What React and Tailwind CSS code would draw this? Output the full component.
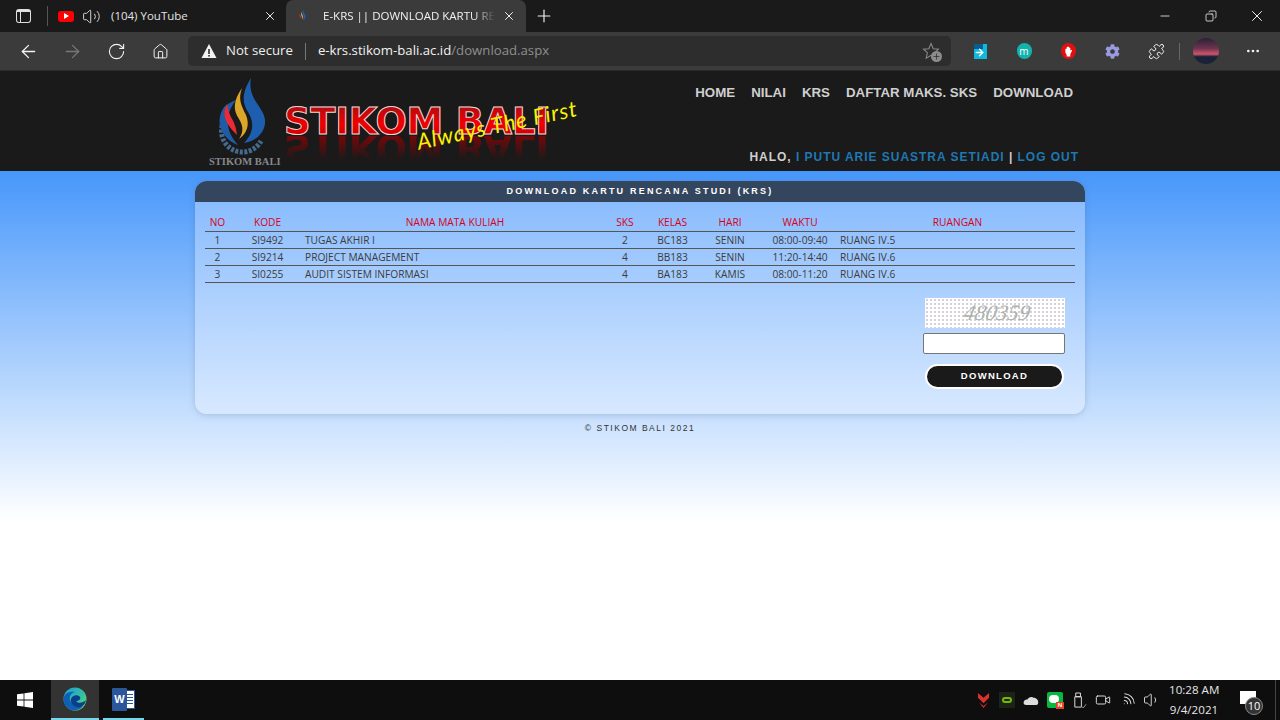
import {
  ArrowLeft,
  ArrowRight,
  Copy,
  Home,
  Minus,
  MoreHorizontal,
  Plus,
  Puzzle,
  RotateCw,
  Video,
  Volume1,
  Volume2,
  Wifi,
  X,
} from "lucide-react";
import { FaCog } from "react-icons/fa";

const courses = [
  { no: 1, kode: "SI9492", nama: "TUGAS AKHIR I", sks: 2, kelas: "BC183", hari: "SENIN", waktu: "08:00-09:40", ruang: "RUANG IV.5" },
  { no: 2, kode: "SI9214", nama: "PROJECT MANAGEMENT", sks: 4, kelas: "BB183", hari: "SENIN", waktu: "11:20-14:40", ruang: "RUANG IV.6" },
  { no: 3, kode: "SI0255", nama: "AUDIT SISTEM INFORMASI", sks: 4, kelas: "BA183", hari: "KAMIS", waktu: "08:00-11:20", ruang: "RUANG IV.6" },
];

const navItems = ["HOME", "NILAI", "KRS", "DAFTAR MAKS. SKS", "DOWNLOAD"];

function FlameLogo({ className }) {
  return (
    <svg viewBox="0 0 70 80" className={className}>
      <path d="M15 44 A21 21 0 0 0 52 64" fill="none" stroke="#456a8e" strokeWidth="5" strokeDasharray="3 1.5" />
      <path d="M15 30 C10 38 9 46 13 54 C16 60 22 66 29 68 C22 60 18 52 19 42 C19 36 22 30 27 23 C22 25 18 27 15 30 Z" fill="#1f5ba6" />
      <path d="M42 1 C34 14 32 24 39 35 C46 46 44 57 35 66 C48 64 57 54 56 43 C55 30 38 22 42 1 Z" fill="#1d5fae" />
      <path d="M33 11 C24 24 24 33 30 42 C35 50 34 56 30 62 C38 56 41 48 37 38 C32 28 29 22 33 11 Z" fill="#dca629" />
      <path d="M18 27 C13 36 15 46 28 58 C27 50 25 45 22 40 C20 36 19 32 18 27 Z" fill="#ec2a35" />
    </svg>
  );
}

function EdgeIcon() {
  return (
    <svg viewBox="0 0 24 24" className="w-6 h-6">
      <defs>
        <linearGradient id="edgeTop" x1="0" y1="0" x2="1" y2="1">
          <stop offset="0" stopColor="#1f9fd8" />
          <stop offset="0.6" stopColor="#35c1a0" />
          <stop offset="1" stopColor="#7fe04f" />
        </linearGradient>
      </defs>
      <circle cx="12" cy="12" r="11.5" fill="url(#edgeTop)" />
      <path d="M0.6 12 C1 6 7 4 12 5 C8 6 6 9 7 13 C8 18 14 20 20 19 C17 23 12 24 9 23 C4 22 0.5 17 0.6 12 Z" fill="#0f5fb5" />
      <path d="M8 12 C9 8 15 7 17 10 C18 12 16 14 13 14 C15 17 20 16 23 13 C22 19 17 21 14 20 C10 19 7 16 8 12 Z" fill="#0b3f8c" />
    </svg>
  );
}

function WordIcon() {
  return (
    <div className="relative w-[23px] h-[23px]">
      <div className="absolute right-0 top-[2px] w-[14px] h-[19px] bg-white border border-[#2b579a] flex flex-col justify-center gap-[2px] pl-[5px] pr-[1px]">
        <div className="h-[1px] bg-[#2b579a]" />
        <div className="h-[1px] bg-[#2b579a]" />
        <div className="h-[1px] bg-[#2b579a]" />
        <div className="h-[1px] bg-[#2b579a]" />
      </div>
      <div className="absolute left-0 top-0 w-[15px] h-[23px] bg-[#2b579a] rounded-[1px] flex items-center justify-center text-white text-[11px] font-bold font-['Liberation_Sans',sans-serif]">
        W
      </div>
    </div>
  );
}

function TabStrip() {
  return (
    <div className="h-8 bg-[#1a1a1a] flex items-end text-[11.5px] font-['Open_Sans',sans-serif]">
      <div className="w-[47px] h-8 flex items-center justify-center">
        <div className="w-[15px] h-[14px] border border-[#e0e0e0] rounded-[3px] border-t-[3px] relative">
          <div className="absolute left-[3px] top-0 bottom-0 w-[1px] bg-[#e0e0e0]" />
        </div>
      </div>
      <div className="w-[1px] h-5 bg-[#555] mb-[6px]" />
      <div className="w-[238px] h-8 flex items-center text-[#e4e4e4]">
        <div className="ml-[10px] w-[16px] h-[11px] bg-[#f00] rounded-[3px] flex items-center justify-center">
          <div className="w-0 h-0 border-y-[3px] border-y-transparent border-l-[5px] border-l-white" />
        </div>
        <Volume2 size={19} strokeWidth={1.2} className="ml-[8px] text-[#ddd]" />
        <span className="ml-[10px] flex-1">(104) YouTube</span>
        <X size={14} strokeWidth={1.7} className="mr-[9px] text-[#eee]" />
      </div>
      <div className="w-[240px] h-8 bg-[#3b3b3b] rounded-t-[7px] flex items-center text-[#f0f0f0]">
        <svg viewBox="0 0 70 80" className="ml-[11px] w-[11px] h-[14px]">
          <path d="M42 1 C34 14 32 24 39 35 C46 46 44 57 35 66 C48 64 57 54 56 43 C55 30 38 22 42 1 Z" fill="#1d5fae" />
          <path d="M33 11 C24 24 24 33 30 42 C35 50 34 56 30 62 C38 56 41 48 37 38 C32 28 29 22 33 11 Z" fill="#dca629" />
          <path d="M18 27 C13 36 15 46 28 58 C27 50 25 45 22 40 C20 36 19 32 18 27 Z" fill="#ec2a35" />
        </svg>
        <span className="ml-[15px] w-[172px] overflow-hidden whitespace-nowrap [mask-image:linear-gradient(90deg,#000_88%,transparent)]">
          E-KRS || DOWNLOAD KARTU RENCANA STUDI
        </span>
        <X size={14} strokeWidth={1.7} className="ml-[7px] text-[#f2f2f2]" />
      </div>
      <div className="w-9 h-8 flex items-center justify-center text-[#f2f2f2]">
        <Plus size={20} strokeWidth={1.4} />
      </div>
      <div className="ml-auto h-8 flex items-center text-[#f2f2f2]">
        <div className="w-[46px] flex justify-center"><Minus size={14} strokeWidth={1.4} /></div>
        <div className="w-[46px] flex justify-center"><Copy size={12} strokeWidth={1.6} className="-scale-x-100" /></div>
        <div className="w-[46px] flex justify-center"><X size={18} strokeWidth={1.3} /></div>
      </div>
    </div>
  );
}

function ToolButton({ children, className = "" }) {
  return <div className={`w-11 h-full flex items-center justify-center shrink-0 ${className}`}>{children}</div>;
}

function Toolbar() {
  return (
    <div className="h-[39px] bg-[#3b3b3b] border-b border-[#2a2a2a] flex items-center pl-[6px] font-['Open_Sans',sans-serif]">
      <ToolButton><ArrowLeft size={21} strokeWidth={1.5} className="text-[#f2f2f2]" /></ToolButton>
      <ToolButton><ArrowRight size={21} strokeWidth={1.5} className="text-[#777]" /></ToolButton>
      <ToolButton><RotateCw size={19} strokeWidth={1.4} className="text-[#f2f2f2]" /></ToolButton>
      <ToolButton><Home size={17} strokeWidth={1.4} className="text-[#f2f2f2]" /></ToolButton>
      <div className="ml-[6px] w-[763px] h-[30px] bg-[#2d2d2d] rounded-[5px] flex items-center text-[13.2px] shrink-0">
        <svg viewBox="0 0 16 16" className="ml-[13px] w-4 h-4">
          <path d="M8 1 L15.5 15 H0.5 Z" fill="#f2f2f2" />
          <rect x="7.2" y="6" width="1.6" height="5" fill="#2d2d2d" />
          <rect x="7.2" y="12" width="1.6" height="1.6" fill="#2d2d2d" />
        </svg>
        <span className="ml-[9px] text-[#eee]">Not secure</span>
        <div className="ml-3 w-[1px] h-[17px] bg-[#777]" />
        <span className="ml-3 text-[#f2f2f2]">
          e-krs.stikom-bali.ac.id<span className="text-[#8f8f8f]">/download.aspx</span>
        </span>
        <div className="ml-auto mr-[10px] relative w-5 h-5 flex items-center justify-center">
          <svg viewBox="0 0 24 24" className="w-[18px] h-[18px]" fill="none" stroke="#8a8a8a" strokeWidth="1.4">
            <path d="M12 2 L15 9 L22 9.6 L16.8 14.3 L18.4 21.5 L12 17.7 L5.6 21.5 L7.2 14.3 L2 9.6 L9 9 Z" />
          </svg>
          <div className="absolute right-[-1px] bottom-[-1px] w-[11px] h-[11px] rounded-full bg-[#8c8c8c] flex items-center justify-center">
            <Plus size={9} strokeWidth={2} className="text-[#2d2d2d]" />
          </div>
        </div>
      </div>
      <div className="w-[7px] shrink-0" />
      <ToolButton>
        <div className="relative w-[13px] h-[15px] bg-[#0fb9dd]">
          <div className="absolute left-0 top-0 w-[9px] h-[5px] bg-[#0b5c8e]" />
          <ArrowRight size={11} strokeWidth={3} className="absolute left-0 top-[3px] text-white" />
        </div>
      </ToolButton>
      <ToolButton>
        <div className="w-[15px] h-[16px] rounded-full bg-[#12b3ad] flex items-center justify-center text-[10px] leading-none text-white">m</div>
      </ToolButton>
      <ToolButton>
        <div className="w-[15px] h-[16px] rounded-full bg-[#e11010] flex items-center justify-center">
          <svg viewBox="0 0 10 12" className="w-[9px] h-[11px]" fill="#fff">
            <path d="M2 3 H3 V1 H4 V0.5 H5 V1 H6 V2 H7 V5 L8.5 4 L9 5 L7 9 V11.5 H3 V10 L1.5 7 V3 Z" />
          </svg>
        </div>
      </ToolButton>
      <ToolButton><FaCog size={15} className="text-[#9a9ae0]" /></ToolButton>
      <ToolButton><Puzzle size={17} strokeWidth={1.4} className="text-[#f2f2f2]" /></ToolButton>
      <div className="ml-[1px] w-[1px] h-[17px] bg-[#666] shrink-0" />
      <div className="ml-[13px] w-[26px] h-[26px] rounded-full shrink-0 bg-[linear-gradient(#2a2035_0%,#6e3350_40%,#d0556a_62%,#1a2238_72%,#1a2238_100%)]" />
      <MoreHorizontal size={16} className="ml-[26px] text-[#f2f2f2]" />
    </div>
  );
}

function SiteHeader() {
  return (
    <header className="h-[100px] bg-[#1a1a1a] font-['Liberation_Sans',sans-serif]">
      <div className="w-[890px] h-full mx-auto flex">
        <div className="w-[89px] shrink-0 pl-[14px] pt-[6px] flex flex-col items-start">
          <FlameLogo className="w-[70px] h-[80px] shrink-0" />
          <span className="-mt-[1px] w-[72px] whitespace-nowrap text-[10.5px] leading-[12px] font-bold text-[#85888c] font-['Liberation_Serif',serif]">
            STIKOM BALI
          </span>
        </div>
        <div className="relative w-[300px] shrink-0 pt-[32px]">
          <div className="text-[37px] leading-[38px] font-bold whitespace-nowrap tracking-[-0.3px] text-transparent bg-clip-text bg-[linear-gradient(#a80d12,#f20000_55%,#c00000)] [-webkit-text-stroke:1px_#d9d9d9] w-fit font-['DejaVu_Sans',sans-serif]">
            STIKOM BALI
          </div>
          <div className="-mt-[5px] -scale-y-100 h-[30px] text-[37px] leading-[38px] font-bold whitespace-nowrap tracking-[-0.3px] text-transparent bg-clip-text bg-[linear-gradient(transparent_20%,#6a0a0c_90%)] w-fit font-['DejaVu_Sans',sans-serif]">
            STIKOM BALI
          </div>
          <span className="absolute left-[133px] top-[60px] -rotate-[12deg] origin-left whitespace-nowrap text-[22px] leading-none italic text-[#f8f400] font-['Lato',sans-serif] tracking-[0.9px]">
            Always The First
          </span>
        </div>
        <div className="flex-1 flex flex-col items-end justify-between pt-[12px] pb-[6px]">
          <nav className="flex gap-4 pr-3 text-[13.3px] leading-5 font-bold text-[#cfcfcf]">
            {navItems.map((item) => (
              <a key={item}>{item}</a>
            ))}
          </nav>
          <div className="pr-[6px] text-[12px] leading-4 font-bold tracking-[0.97px] text-[#cfcfcf]">
            HALO, <span className="text-[#1f78b4]">I PUTU ARIE SUASTRA SETIADI</span> | <span className="text-[#1f78b4]">LOG OUT</span>
          </div>
        </div>
      </div>
    </header>
  );
}

function CourseTable() {
  return (
    <table className="w-[870px] table-fixed border-collapse text-[10.2px] leading-[16px] font-['Open_Sans',sans-serif] text-[#3c3c3c]">
      <colgroup>
        <col className="w-[25px]" />
        <col className="w-[75px]" />
        <col className="w-[300px]" />
        <col className="w-[40px]" />
        <col className="w-[55px]" />
        <col className="w-[60px]" />
        <col className="w-[80px]" />
        <col />
      </colgroup>
      <thead>
        <tr className="border-b border-[#555] text-[#d80020] h-[18px]">
          <th className="font-normal">NO</th>
          <th className="font-normal">KODE</th>
          <th className="font-normal">NAMA MATA KULIAH</th>
          <th className="font-normal">SKS</th>
          <th className="font-normal">KELAS</th>
          <th className="font-normal">HARI</th>
          <th className="font-normal">WAKTU</th>
          <th className="font-normal">RUANGAN</th>
        </tr>
      </thead>
      <tbody>
        {courses.map((c) => (
          <tr key={c.kode} className="border-b border-[#555] h-[17px]">
            <td className="text-center">{c.no}</td>
            <td className="text-center">{c.kode}</td>
            <td>{c.nama}</td>
            <td className="text-center">{c.sks}</td>
            <td className="text-center">{c.kelas}</td>
            <td className="text-center">{c.hari}</td>
            <td className="text-center">{c.waktu}</td>
            <td>{c.ruang}</td>
          </tr>
        ))}
      </tbody>
    </table>
  );
}

function DownloadPanel() {
  return (
    <section className="w-[890px] h-[233px] mt-[10px] mx-auto rounded-[12px] overflow-hidden shadow-[0_1px_6px_rgba(60,90,130,0.25)] bg-[linear-gradient(#83b8fd,#d8e9ff)] flex flex-col">
      <div className="h-[21px] bg-[#34465e] text-center text-white text-[9px] leading-[20px] font-bold tracking-[2.2px] font-['Liberation_Sans',sans-serif]">
        DOWNLOAD KARTU RENCANA STUDI (KRS)
      </div>
      <div className="px-[10px] pt-[11px]">
        <CourseTable />
      </div>
      <div className="mt-[15px] pr-[20px] flex flex-col items-end">
        <div className="w-[140px] h-[30px] flex items-center justify-center bg-white bg-[radial-gradient(#d6d0da_1px,transparent_1px)] bg-[length:4px_4px] text-[#adb2ad] italic text-[22px] pl-[4px] font-['Liberation_Serif',serif]">
          <span className="-skew-x-12">480359</span>
        </div>
        <input className="mt-[5px] w-[142px] h-[21px] bg-white border border-[#767676] rounded-[2px]" />
        <button className="mt-[10px] mr-[1px] w-[139px] h-[25px] rounded-full border-2 border-white bg-[#1a1a1a] text-white text-[9.5px] font-bold tracking-[1.3px] font-['Liberation_Sans',sans-serif]">
          DOWNLOAD
        </button>
      </div>
    </section>
  );
}

function Taskbar() {
  return (
    <div className="h-10 bg-[#0e0e0e] flex items-center shrink-0 font-['Open_Sans',sans-serif]">
      <div className="w-[49px] flex justify-center">
        <svg viewBox="0 0 16 16" className="w-4 h-4" fill="#fff">
          <path d="M0 2.3 L6.6 1.4 V7.5 H0 Z M7.4 1.3 L16 0 V7.5 H7.4 Z M0 8.5 H6.6 V14.6 L0 13.7 Z M7.4 8.5 H16 V16 L7.4 14.7 Z" />
        </svg>
      </div>
      <div className="ml-[2px] w-12 h-10 bg-[#333] border-b-2 border-[#76d7ea] flex items-center justify-center"><EdgeIcon /></div>
      <div className="ml-1 w-[41px] h-10 border-b-2 border-[#76d7ea] flex items-center justify-center"><WordIcon /></div>
      <div className="ml-auto flex items-center h-10">
        <div className="w-6 flex justify-center">
          <svg viewBox="0 0 14 16" className="w-[13px] h-[15px]" fill="#d8322f">
            <path d="M1 0 L7 5 L13 0 V5 L7 11 L1 5 Z M2 10 L7 14 L12 10 L7 16 Z" />
          </svg>
        </div>
        <div className="w-6 flex justify-center">
          <div className="w-4 h-4 bg-[#1c241a] flex items-center justify-center">
            <div className="w-[10px] h-[6px] rounded-full border-2 border-[#76b900]" />
          </div>
        </div>
        <div className="w-6 flex justify-center">
          <svg viewBox="0 0 18 12" className="w-4 h-[11px]">
            <path d="M4 11 C1 11 0 9 1 7 C2 5 4 5 5 5 C6 2 10 1 12 3 C15 3 18 6 17 9 C17 10 16 11 15 11 Z" fill="#ddd" />
          </svg>
        </div>
        <div className="w-6 flex justify-center">
          <div className="relative w-4 h-4 bg-[#09b83e] rounded-[2px] flex items-center justify-center">
            <div className="w-[10px] h-[8px] rounded-full bg-white mb-[2px] mr-[2px]" />
            <div className="absolute right-[-1px] bottom-[-1px] w-[8px] h-[7px] bg-[#e8401c] text-white text-[6px] leading-[7px] text-center font-bold">N</div>
          </div>
        </div>
        <div className="w-6 flex justify-center">
          <svg viewBox="0 0 16 18" className="w-[15px] h-[17px]" fill="none" stroke="#e6e6e6" strokeWidth="1">
            <path d="M4 1 H9 V5 H4 Z M3 5 H10 V16 H3 Z" />
            <path d="M10 15 L12 17 L15 13" stroke="#999" />
          </svg>
        </div>
        <div className="w-6 flex justify-center"><Video size={16} strokeWidth={1.4} className="text-[#e6e6e6]" /></div>
        <div className="w-[25px] flex justify-center"><Wifi size={16} strokeWidth={1.5} className="text-[#e0e0e0] rotate-45" /></div>
        <div className="w-6 flex justify-center"><Volume1 size={18} strokeWidth={1.2} className="text-[#e6e6e6]" /></div>
        <div className="ml-[5px] w-[50px] text-center text-[11.6px] leading-[20px] text-[#e6e6e6] whitespace-nowrap">
          <div>10:28 AM</div>
          <div>9/4/2021</div>
        </div>
        <div className="relative w-[56px] h-10 flex items-center justify-center">
          <div className="w-4 h-[13px] bg-white mb-[6px] ml-[1px]" />
          <div className="absolute left-[26px] top-[17px] w-[18px] h-[18px] rounded-full bg-[#333] border border-[#888] text-white text-[11px] leading-[16px] text-center">10</div>
        </div>
        <div className="w-[1px] h-10 bg-[#444] mr-[4px]" />
      </div>
    </div>
  );
}

export default function App() {
  return (
    <div className="h-[720px] flex flex-col overflow-hidden bg-white">
      <TabStrip />
      <Toolbar />
      <SiteHeader />
      <main className="flex-1 bg-[linear-gradient(#4797fb,#ffffff_350px)]">
        <DownloadPanel />
        <p className="mt-[9px] text-center text-[8.5px] leading-[11px] tracking-[1.5px] text-[#333] font-['Liberation_Sans',sans-serif]">
          © STIKOM BALI 2021
        </p>
      </main>
      <Taskbar />
    </div>
  );
}
